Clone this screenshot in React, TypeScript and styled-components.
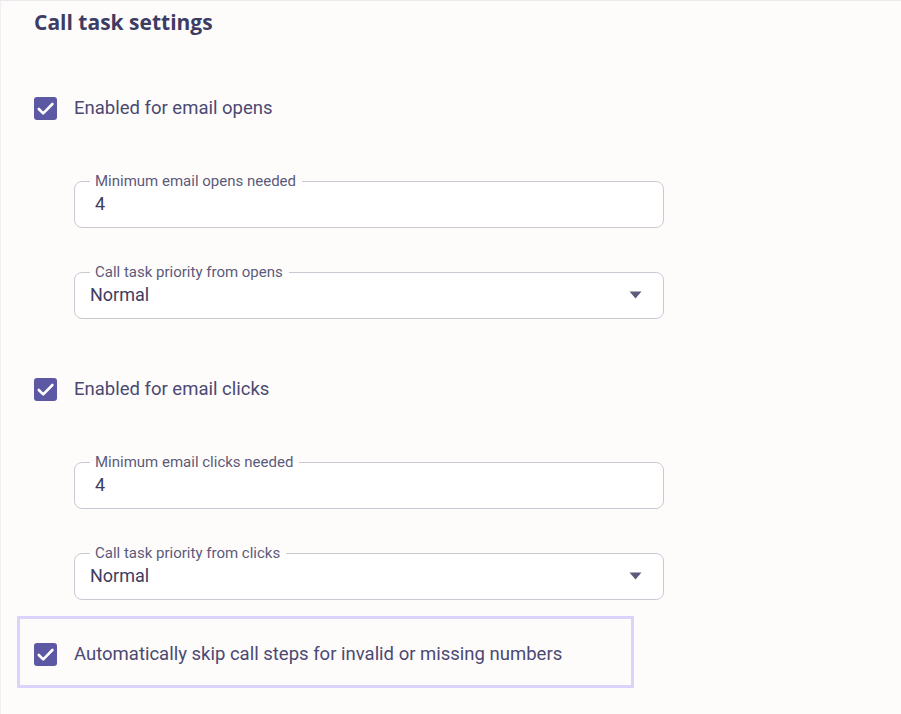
import React from "react";
import styled, { createGlobalStyle } from "styled-components";

const Global = createGlobalStyle`
  html, body { margin: 0; padding: 0; background: #fdfcfb; }
  body { font-family: Roboto, "Liberation Sans", sans-serif; }
`;

const Page = styled.div`
  width: 901px;
  height: 714px;
  box-sizing: border-box;
  border-top: 1px solid #ebe9ee;
  border-left: 1px solid #f1eff1;
  padding: 7px 0 0 16px;
  overflow: hidden;
`;

const Heading = styled.h2`
  margin: 0 0 0 17px;
  font-family: "Open Sans", Inter, sans-serif;
  font-weight: 700;
  font-size: 21px;
  line-height: 28px;
  color: #3d3c64;
`;

const Section = styled.div<{ $top: number }>`
  margin: ${(p) => p.$top}px 0 0 17px;
  display: flex;
  flex-direction: column;
`;

const CheckRow = styled.label`
  display: flex;
  align-items: center;
  gap: 17px;
  height: 24px;
  font-size: 18.5px;
  color: #4b4972;
  cursor: pointer;
`;

const Box = styled.span`
  width: 23px;
  height: 23px;
  border-radius: 3px;
  background: #5c58a4;
  display: flex;
  align-items: center;
  justify-content: center;
  flex: none;
`;

const Fields = styled.div`
  margin: 53px 0 0 40px;
  display: flex;
  flex-direction: column;
  gap: 36px;
  width: 590px;
`;

const Field = styled.fieldset<{ $pad: number }>`
  margin: 0;
  padding: 5px 16px 13px ${(p) => p.$pad}px;
  border: 1px solid #cac8d0;
  border-radius: 8px;
  background: #ffffff;
  display: flex;
  align-items: center;
  min-width: 0;
`;

const Legend = styled.legend<{ $shift: number }>`
  margin-left: ${(p) => p.$shift}px;
  padding: 0 6px 0 5px;
  font-size: 15px;
  line-height: 16px;
  color: #5c5a7a;
`;

const Value = styled.span`
  flex: 1;
  font-size: 18px;
  line-height: 20px;
  color: #3e3c60;
`;

const Arrow = styled.svg`
  flex: none;
  margin-right: 5px;
`;

const Highlight = styled.div`
  margin-top: 16px;
  width: 617px;
  height: 72px;
  box-sizing: border-box;
  border: 3px solid #dad3fb;
  padding: 4px 14px 0;
  display: flex;
  align-items: center;
`;

const Check = () => (
  <Box>
    <svg width="23" height="23" viewBox="0 0 23 23" fill="none">
      <path d="M4.8 12l4.4 4.4L18.4 7" stroke="#fff" strokeWidth="2.6" strokeLinecap="round" strokeLinejoin="round" />
    </svg>
  </Box>
);

const TextField = ({ label, value }: { label: string; value: string }) => (
  <Field $pad={20}>
    <Legend $shift={-5}>{label}</Legend>
    <Value>{value}</Value>
  </Field>
);

const SelectField = ({ label, value }: { label: string; value: string }) => (
  <Field $pad={15}>
    <Legend $shift={0}>{label}</Legend>
    <Value>{value}</Value>
    <Arrow width="13" height="8" viewBox="0 0 13 8">
      <path d="M0.5 0.5h12L6.5 7.5z" fill="#5d5b7d" />
    </Arrow>
  </Field>
);

const Group = ({ top, label, kind }: { top: number; label: string; kind: string }) => (
  <Section $top={top}>
    <CheckRow>
      <Check />
      {label}
    </CheckRow>
    <Fields>
      <TextField label={`Minimum email ${kind} needed`} value="4" />
      <SelectField label={`Call task priority from ${kind}`} value="Normal" />
    </Fields>
  </Section>
);

export default function App() {
  return (
    <>
      <Global />
      <Page>
        <Heading>Call task settings</Heading>
        <Group top={60} label="Enabled for email opens" kind="opens" />
        <Group top={58} label="Enabled for email clicks" kind="clicks" />
        <Highlight>
          <CheckRow>
            <Check />
            Automatically skip call steps for invalid or missing numbers
          </CheckRow>
        </Highlight>
      </Page>
    </>
  );
}
